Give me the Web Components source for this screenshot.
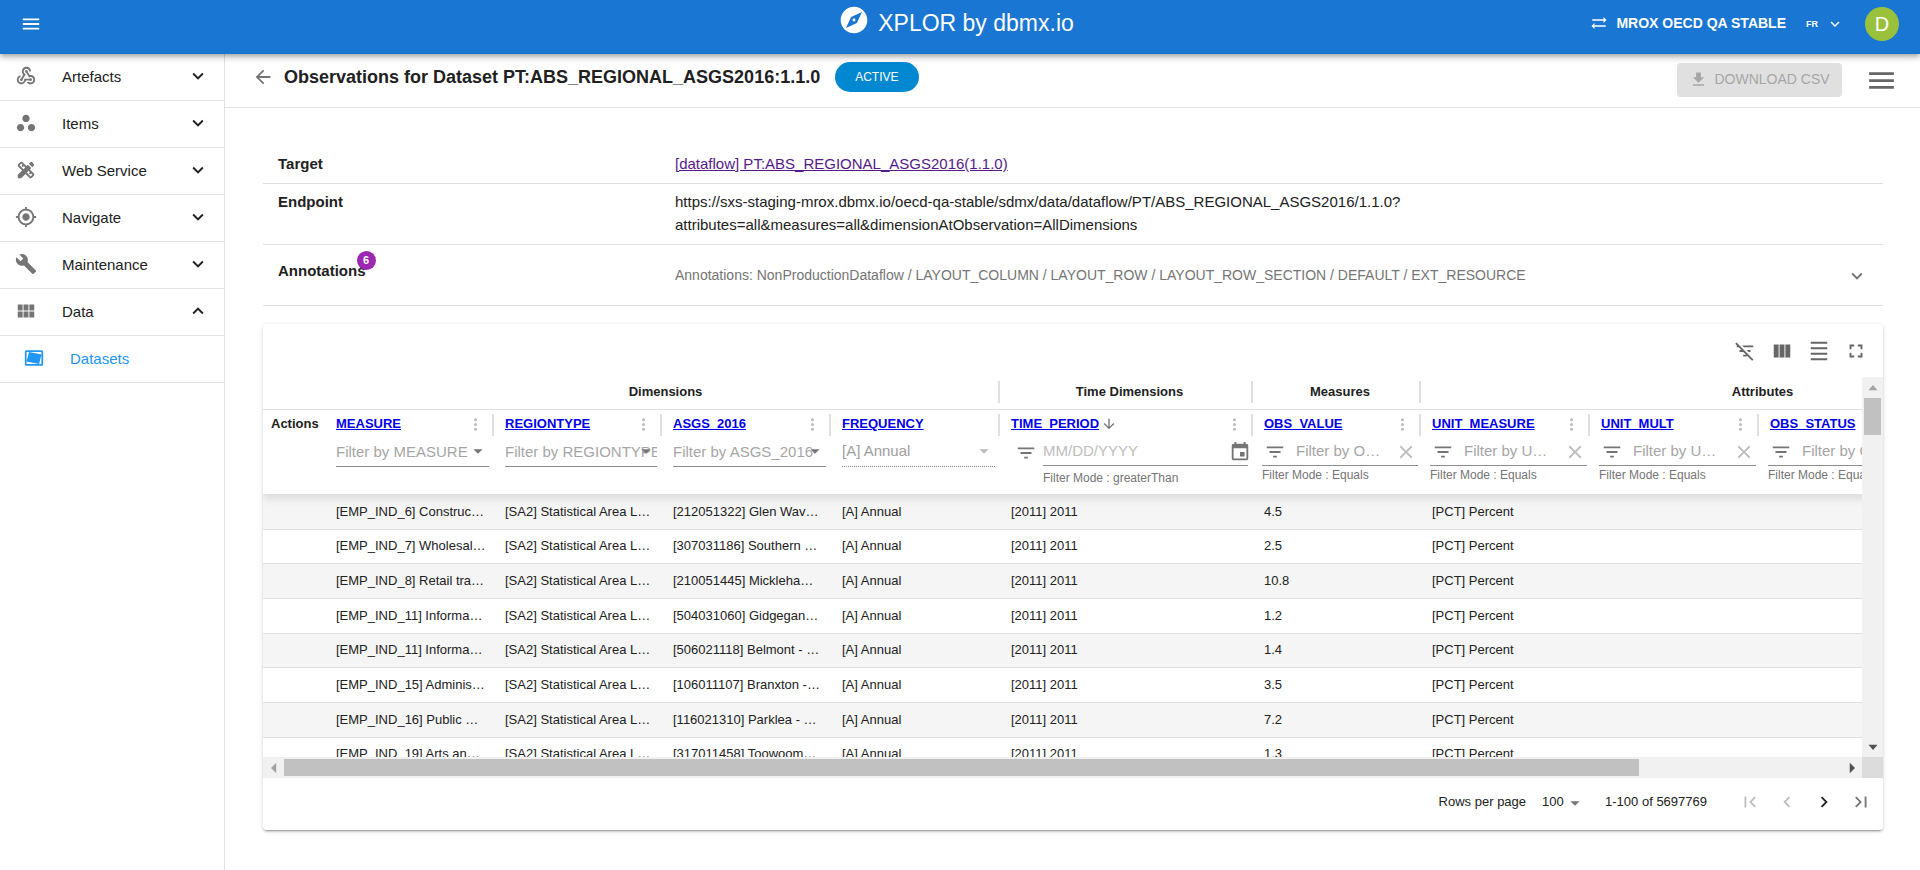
<!DOCTYPE html>
<html lang="en">
<head>
<meta charset="utf-8">
<title>XPLOR by dbmx.io</title>
<style>
  body {
    margin: 0;
    min-height: 100vh;
    background: #fff;
    color: #212121;
    font: 15px/23px "Liberation Sans", Arial, sans-serif;
  }
</style>
</head>
<body>
<xplor-app></xplor-app>

<script>
const ICONS = {
  menu: 'M3 18h18v-2H3v2zm0-5h18v-2H3v2zm0-7v2h18V6H3z',
  webhook: 'M10 15h5.88c.27-.31.67-.5 1.12-.5.83 0 1.5.67 1.5 1.5s-.67 1.5-1.5 1.5c-.44 0-.84-.19-1.12-.5H11.9c-.46 2.28-2.48 4-4.9 4-2.76 0-5-2.24-5-5 0-2.42 1.72-4.44 4-4.9v2.07c-1.16.41-2 1.53-2 2.83 0 1.65 1.35 3 3 3s3-1.35 3-3v-1zm2.5-11c1.65 0 3 1.35 3 3h2c0-2.76-2.24-5-5-5s-5 2.24-5 5c0 1.43.6 2.71 1.55 3.62l-2.35 3.9c-.68.14-1.2.75-1.2 1.48 0 .83.67 1.5 1.5 1.5s1.5-.67 1.5-1.5c0-.16-.02-.31-.07-.45l3.38-5.63C10.49 9.61 9.5 8.42 9.5 7c0-1.65 1.35-3 3-3zm4.5 9c-.64 0-1.23.2-1.72.54l-3.05-5.07C11.53 8.35 11 7.74 11 7c0-.83.67-1.5 1.5-1.5S14 6.17 14 7c0 .15-.02.29-.06.43l2.19 3.65c.28-.05.57-.08.87-.08 2.76 0 5 2.24 5 5s-2.24 5-5 5c-1.85 0-3.47-1.01-4.33-2.5h2.67c.48.32 1.05.5 1.66.5 1.65 0 3-1.35 3-3s-1.35-3-3-3z',
  workspaces: 'M6 13c-2.2 0-4 1.8-4 4s1.8 4 4 4 4-1.8 4-4-1.8-4-4-4zm6-10C9.8 3 8 4.8 8 7s1.8 4 4 4 4-1.8 4-4-1.8-4-4-4zm6 10c-2.2 0-4 1.8-4 4s1.8 4 4 4 4-1.8 4-4-1.8-4-4-4z',
  design: 'm16.24 11.51 1.57-1.57-3.75-3.75-1.57 1.57-4.14-4.13c-.78-.78-2.05-.78-2.83 0l-1.9 1.9c-.78.78-.78 2.05 0 2.83l4.13 4.13L3 17.25V21h3.75l4.76-4.76 4.13 4.13c.95.95 2.23.6 2.83 0l1.9-1.9c.78-.78.78-2.05 0-2.83l-4.13-4.13zm-7.06-.44L5.04 6.94l1.89-1.9L8.2 6.31 7.02 7.5l1.41 1.41 1.19-1.19 1.45 1.45-1.89 1.9zm7.88 7.89-4.13-4.13 1.9-1.9 1.45 1.45-1.19 1.19 1.41 1.41 1.19-1.19 1.27 1.27-1.9 1.9zm3.65-11.92c.39-.39.39-1.02 0-1.41l-2.34-2.34c-.47-.47-1.12-.29-1.41 0l-1.83 1.83 3.75 3.75 1.83-1.83z',
  location: 'M12 8c-2.21 0-4 1.79-4 4s1.79 4 4 4 4-1.79 4-4-1.79-4-4-4zm8.94 3c-.46-4.17-3.77-7.48-7.94-7.94V1h-2v2.06C6.83 3.52 3.52 6.83 3.06 11H1v2h2.06c.46 4.17 3.77 7.48 7.94 7.94V23h2v-2.06c4.17-.46 7.48-3.77 7.94-7.94H23v-2h-2.06zM12 19c-3.87 0-7-3.13-7-7s3.13-7 7-7 7 3.13 7 7-3.13 7-7 7z',
  build: 'm22.7 19-9.1-9.1c.9-2.3.4-5-1.5-6.9-2-2-5-2.4-7.4-1.3L9 6 6 9 1.6 4.7C.4 7.1.9 10.1 2.9 12.1c1.9 1.9 4.6 2.4 6.9 1.5l9.1 9.1c.4.4 1 .4 1.4 0l2.3-2.3c.5-.4.5-1.1.1-1.4z',
  module: 'M14.67 5v6.5H9.33V5h5.34zm1 6.5H21V5h-5.33v6.5zm-1 7.5v-6.5H9.33V19h5.34zm1-6.5V19H21v-6.5h-5.33zm-7.34 0H3V19h5.33v-6.5zm0-1V5H3v6.5h5.33z',
  dataset: 'M3.6 3.500h16.800A1.700 1.700 0 0 1 22 5.200v13.600a1.700 1.700 0 0 1-1.600 1.700H3.600A1.700 1.700 0 0 1 2 18.800V5.200A1.700 1.700 0 0 1 3.600 3.500zM3.900 5.400v13.200h16.200V5.400H3.900zM6.600 5.400 20.100 8.200 17.600 18.600 3.900 15.800z',
  down: 'M16.59 8.59 12 13.17 7.41 8.59 6 10l6 6 6-6z',
  up: 'm12 8-6 6 1.410 1.410L12 10.830l4.590 4.580L18 14z',
  explore: 'M12 10.9c-.61 0-1.1.49-1.1 1.1s.49 1.1 1.1 1.1c.61 0 1.1-.49 1.1-1.1s-.49-1.1-1.1-1.1zM12 2C6.48 2 2 6.48 2 12s4.48 10 10 10 10-4.48 10-10S17.52 2 12 2zm2.19 12.19L6 18l3.81-8.19L18 6l-3.81 8.190z',
  swap: 'm22 8-4-4v3H3v2h15v3l4-4zM2 16l4 4v-3h15v-2H6v-3l-4 4z',
  download: 'M5 20h14v-2H5v2zM19 9h-4V3H9v6H5l7 7 7-7z',
  filterOff: 'M10.83 8H21V6H8.83l2 2zm5 5H18v-2h-4.17l2 2zM14 16.83V18h-4v-2h3.17l-3-3H6v-2h2.17l-3-3H3V6h.17L1.39 4.22 2.8 2.81l18.38 18.38-1.41 1.41L14 16.83z',
  columns: 'M14.67 5v14H9.33V5h5.34zm1 14H21V5h-5.33v14zm-7.34 0V5H3v14h5.330z',
  density: 'M3 2h18v2H3zm0 18h18v2H3zm0-6h18v2H3zm0-6h18v2H3z',
  fullscreen: 'M7 14H5v5h5v-2H7v-3zm-2-4h2V7h3V5H5v5zm12 7h-3v2h5v-5h-2v3zM14 5v2h3v3h2V5h-5z',
  more: 'M12 8c1.1 0 2-.9 2-2s-.9-2-2-2-2 .9-2 2 .9 2 2 2zm0 2c-1.1 0-2 .9-2 2s.9 2 2 2 2-.9 2-2-.9-2-2-2zm0 6c-1.1 0-2 .9-2 2s.9 2 2 2 2-.9 2-2-.9-2-2-2z',
  filter: 'M10 18h4v-2h-4v2zM3 6v2h18V6H3zm3 7h12v-2H6v2z',
  sortDown: 'm20 12-1.41-1.41L13 16.17V4h-2v12.17l-5.58-5.59L4 12l8 8 8-8z',
  close: 'M19 6.41 17.59 5 12 10.59 6.41 5 5 6.41 10.59 12 5 17.59 6.41 19 12 13.41 17.59 19 19 17.59 13.41 12z',
  event: 'M17 12h-5v5h5v-5zM16 1v2H8V1H6v2H5c-1.11 0-1.99.9-1.99 2L3 19c0 1.1.89 2 2 2h14c1.1 0 2-.9 2-2V5c0-1.1-.9-2-2-2h-1V1h-2zm3 18H5V8h14v11z',
  dropdown: 'm7 10 5 5 5-5z',
  back: 'M20 11H7.83l5.59-5.59L12 4l-8 8 8 8 1.41-1.41L7.83 13H20v-2z',
  first: 'M18.41 16.59 13.82 12l4.59-4.59L17 6l-6 6 6 6zM6 6h2v12H6z',
  prev: 'M15.41 7.41 14 6l-6 6 6 6 1.41-1.41L10.83 12z',
  next: 'M10 6 8.59 7.41 13.17 12l-4.58 4.59L10 18l6-6z',
  last: 'M5.59 7.41 10.18 12l-4.59 4.59L7 18l6-6-6-6zM16 6h2v12h-2z',
  triUp: 'M12 8l6 7H6z',
  triDown: 'M12 16l6-7H6z',
  triLeft: 'M8 12l7-7v14z',
  triRight: 'M16 12l-7-7v14z'
};

const define = (name, html) => {
  customElements.define(name, class extends HTMLElement {
    connectedCallback() {
      if (this.shadowRoot) return;
      const template = document.createElement('template');
      template.innerHTML = typeof html === 'function' ? html(this) : html;
      this.attachShadow({ mode: 'open' }).append(template.content.cloneNode(true));
    }
  });
};

const BUTTON_RESET = `
  button { display: inline-flex; align-items: center; justify-content: center; margin: 0; padding: 0;
    border: 0; background: none; color: inherit; font: inherit; cursor: pointer; }
  button:disabled { cursor: default; }
`;

/* Icon: <x-icon name size> */
define('x-icon', el => `
  <style>
    :host { display: inline-flex; flex: none; }
    svg { display: block; fill: currentColor; }
  </style>
  <svg width="${el.getAttribute('size') || 22}" height="${el.getAttribute('size') || 22}" viewBox="0 0 24 24" aria-hidden="true">
    <path fill-rule="evenodd" d="${ICONS[el.getAttribute('name')]}"/>
  </svg>`);

/* Top bar */
define('app-header', `
  <style>
    :host { display: block; position: relative; z-index: 2; background: #1976d2; color: #fff;
      box-shadow: 0 2px 4px -1px rgba(0,0,0,.2), 0 4px 5px rgba(0,0,0,.14), 0 1px 10px rgba(0,0,0,.12); }
    ${BUTTON_RESET}
    header { display: grid; grid-template-columns: 1fr auto 1fr; align-items: center; height: 48px; padding: 0 20px 6px; }
    .left { display: flex; }
    .brand { display: flex; align-self: start; gap: 8px; padding: 4px 8px 0 0; font-size: 23px; line-height: 38px; }
    .right { display: flex; justify-content: flex-end; align-items: center; }
    .tenant { gap: 8px; font-size: 14px; font-weight: 700; line-height: 20px; padding-bottom: 2px; }
    .lang { gap: 8px; margin: 0 20px; font-size: 9px; font-weight: 700; }
    .avatar { width: 34px; height: 34px; margin: 0 1px; border-radius: 50%; background: #9ac13c; font-size: 20px; }
  </style>
  <header>
    <div class="left"><button aria-label="Menu"><x-icon name="menu" size="22"></x-icon></button></div>
    <div class="brand"><x-icon name="explore" size="32"></x-icon><span>XPLOR by dbmx.io</span></div>
    <div class="right">
      <button class="tenant"><x-icon name="swap" size="18"></x-icon>MROX OECD QA STABLE</button>
      <button class="lang">FR<x-icon name="down" size="18"></x-icon></button>
      <button class="avatar" aria-label="Account">D</button>
    </div>
  </header>`);

/* Side navigation */
define('nav-item', el => `
  <style>
    :host { display: block; border-bottom: 1px solid #e4e4e4; }
    a { display: flex; align-items: center; height: 44px; padding: 0 15px 2px; color: inherit; text-decoration: none; }
    .icon { color: #757575; margin-right: 25px; }
    .label { flex: 1; }
    :host([child]) a { padding-left: 23px; color: #2196f3; }
    :host([child]) .icon { color: inherit; }
  </style>
  <a href="#">
    <x-icon class="icon" name="${el.getAttribute('icon')}"></x-icon>
    <span class="label"><slot></slot></span>
    ${el.hasAttribute('child') ? '' : `<x-icon name="${el.hasAttribute('open') ? 'up' : 'down'}"></x-icon>`}
  </a>`);

define('side-nav', `
  <style>
    :host { display: block; border-right: 1px solid #e0e0e0; }
  </style>
  <nav>
    <nav-item icon="webhook">Artefacts</nav-item>
    <nav-item icon="workspaces">Items</nav-item>
    <nav-item icon="design">Web Service</nav-item>
    <nav-item icon="location">Navigate</nav-item>
    <nav-item icon="build">Maintenance</nav-item>
    <nav-item icon="module" open>Data</nav-item>
    <nav-item icon="dataset" child>Datasets</nav-item>
  </nav>`);

/* Page title bar */
define('page-title', `
  <style>
    :host { display: flex; align-items: center; justify-content: space-between; height: 46px; padding: 0 22px 7px 27px;
      border-bottom: 1px solid #e4e4e4; }
    ${BUTTON_RESET}
    .left, .right { display: flex; align-items: center; }
    .back { color: #757575; }
    h1 { margin: 0 15px 0 10px; font-size: 18px; line-height: 26px; }
    .chip { padding: 0 20px; border-radius: 15px; background: #0288d1; color: #fff; font-size: 12px; line-height: 30px; }
    .download { gap: 6px; width: 165px; height: 34px; padding-bottom: 2px; border-radius: 4px; background: #e0e0e0; color: #a6a6a6; font-size: 14px; }
    .right { gap: 23px; padding-top: 6px; }
    .more { color: #666; width: 33px; height: 34px; }
  </style>
  <div class="left">
    <button class="back" aria-label="Back"><x-icon name="back"></x-icon></button>
    <h1>Observations for Dataset PT:ABS_REGIONAL_ASGS2016:1.1.0</h1>
    <span class="chip">ACTIVE</span>
  </div>
  <div class="right">
    <button class="download" disabled><x-icon name="download" size="19"></x-icon>DOWNLOAD CSV</button>
    <button class="more" aria-label="Page menu"><x-icon name="menu" size="33"></x-icon></button>
  </div>`);

/* One labelled row of dataset details */
define('detail-row', el => `
  <style>
    :host { display: grid; grid-template-columns: 397px 1fr; padding: 6px 0 8px; border-bottom: 1px solid #e0e0e0; }
    .label { padding-left: 15px; font-weight: 700; }
    .label span { position: relative; }
    .value { padding: 0 15px; }
    .badge { position: absolute; right: -10px; top: -11px; width: 19px; height: 19px; border-radius: 50%;
      background: #9c27b0; color: #fff; font-size: 11px; line-height: 19px; text-align: center; }
    :host([tall]) { padding: 14px 0 16px; }
    :host([tall]) .value { padding-top: 3px; }
  </style>
  <div class="label"><span>${el.getAttribute('label')}${el.hasAttribute('badge') ? `<b class="badge">${el.getAttribute('badge')}</b>` : ''}</span></div>
  <div class="value"><slot></slot></div>`);

define('dataset-details', `
  <style>
    :host { display: block; }
    ${BUTTON_RESET}
    a { color: #551a8b; }
    .accordion { width: 100%; height: 27px; justify-content: space-between; color: #757575; font-size: 14px; }
  </style>
  <detail-row label="Target"><a href="#">[dataflow] PT:ABS_REGIONAL_ASGS2016(1.1.0)</a></detail-row>
  <detail-row label="Endpoint">https://sxs-staging-mrox.dbmx.io/oecd-qa-stable/sdmx/data/dataflow/PT/ABS_REGIONAL_ASGS2016/1.1.0?<br>attributes=all&amp;measures=all&amp;dimensionAtObservation=AllDimensions</detail-row>
  <detail-row label="Annotations" badge="6" tall>
    <button class="accordion" aria-expanded="false"><span>Annotations: NonProductionDataflow / LAYOUT_COLUMN / LAYOUT_ROW / LAYOUT_ROW_SECTION / DEFAULT / EXT_RESOURCE</span><x-icon name="down"></x-icon></button>
  </detail-row>`);

/* Column filter: kind = autocomplete | fixed | date | text */
const FILTERS = {
  autocomplete: name => `
    <div class="line auto"><input placeholder="Filter by ${name}" aria-label="Filter by ${name}"><x-icon class="arrow" name="dropdown"></x-icon></div>`,
  fixed: name => `
    <div class="line auto off"><select disabled aria-label="Filter by ${name}"><option>[A] Annual</option></select><x-icon class="arrow" name="dropdown"></x-icon></div>`,
  date: name => `
    <div class="date">
      <button aria-label="Filter mode"><x-icon name="filter"></x-icon></button>
      <div class="field">
        <div class="line"><input placeholder="MM/DD/YYYY" aria-label="Filter by ${name}"><button aria-label="Choose date"><x-icon name="event"></x-icon></button></div>
        <div class="help">Filter Mode : greaterThan</div>
      </div>
    </div>`,
  text: name => `
    <div class="text">
      <div class="line"><button aria-label="Filter mode"><x-icon name="filter"></x-icon></button><input placeholder="Filter by ${name}" aria-label="Filter by ${name}"><button class="clear" aria-label="Clear"><x-icon name="close"></x-icon></button></div>
      <div class="help">Filter Mode : Equals</div>
    </div>`
};
define('column-filter', el => `
  <style>
    :host { display: block; font-weight: 400; color: #757575; }
    ${BUTTON_RESET}
    input, select { flex: 1; width: 0; min-width: 0; height: 24px; margin: 0; padding: 0 0 2px; border: 0; border-radius: 0; outline: 0; background: none;
      appearance: none; color: #9e9e9e; opacity: 1; font: inherit; font-size: 15px; text-overflow: ellipsis; }
    ::placeholder { color: #a6a6a6; opacity: 1; }
    .line { display: flex; align-items: center; height: 27px; border-bottom: 1px solid #8c8c8c; }
    .auto { position: relative; height: 28px; }
    .auto input { text-overflow: clip; }
    .arrow { position: absolute; right: 0; top: 2px; }
    .off { border-bottom: 1px dotted #8c8c8c; }
    .off .arrow { color: #bdbdbd; }
    .date { display: flex; }
    .date > button { align-self: start; height: 27px; margin: 1px 6px 0 4px; }
    .date input::placeholder { color: #bdbdbd; }
    .date .line button { margin-right: -3px; }
    .date .help { padding-top: 3px; }
    .field { flex: 1; }
    .text { margin: 0 -2px; }
    .text button { margin-left: 2px; }
    .text input { margin-left: 10px; }
    .text .clear { margin: 0 1px 0 14px; color: #bdbdbd; }
    .help { font-size: 12px; line-height: 18px; }
  </style>
  ${FILTERS[el.getAttribute('kind')](el.getAttribute('name'))}`);

/* Scroll bar with end arrows: orientation = vertical | horizontal */
define('scroll-track', el => {
  const vertical = el.getAttribute('orientation') === 'vertical';
  return `
  <style>
    :host { display: flex; flex-direction: ${vertical ? 'column' : 'row'}; background: #f1f1f1; color: #505050; min-height: 0; }
    .end { display: flex; flex: none; align-items: center; justify-content: center; width: 21px; height: 21px; }
    .end.start { color: #a3a3a3; }
    .track { flex: 1; display: flex; flex-direction: ${vertical ? 'column' : 'row'}; padding: ${vertical ? '0 2px' : '2px 0'}; }
    .thumb { flex: none; flex-basis: ${el.getAttribute('size')}; background: #c1c1c1; }
  </style>
  <div class="end start"><x-icon name="${vertical ? 'triUp' : 'triLeft'}" size="18"></x-icon></div>
  <div class="track"><div class="thumb"></div></div>
  <div class="end"><x-icon name="${vertical ? 'triDown' : 'triRight'}" size="18"></x-icon></div>`;
});

/* Observation table */
const COLUMNS = [
  ['MEASURE', 'autocomplete', 169], ['REGIONTYPE', 'autocomplete', 168], ['ASGS_2016', 'autocomplete', 169],
  ['FREQUENCY', 'fixed', 169], ['TIME_PERIOD', 'date', 253], ['OBS_VALUE', 'text', 168],
  ['UNIT_MEASURE', 'text', 169], ['UNIT_MULT', 'text', 169], ['OBS_STATUS', 'text', 169]
];
const ROWS = [
  ['[EMP_IND_6] Construc…', '[212051322] Glen Wav…', '4.5'],
  ['[EMP_IND_7] Wholesal…', '[307031186] Southern …', '2.5'],
  ['[EMP_IND_8] Retail tra…', '[210051445] Mickleha…', '10.8'],
  ['[EMP_IND_11] Informa…', '[504031060] Gidgegan…', '1.2'],
  ['[EMP_IND_11] Informa…', '[506021118] Belmont - …', '1.4'],
  ['[EMP_IND_15] Adminis…', '[106011107] Branxton -…', '3.5'],
  ['[EMP_IND_16] Public …', '[116021310] Parklea - …', '7.2'],
  ['[EMP_IND_19] Arts an…', '[317011458] Toowoom…', '1.3']
];
define('observation-table', `
  <style>
    :host { display: grid; grid-template-columns: minmax(0, 1fr) 21px; grid-template-rows: minmax(0, 380px) 21px; }
    ${BUTTON_RESET}
    .view { overflow: hidden; }
    .corner { background: #dcdcdc; }
    table { width: 1838px; table-layout: fixed; border-collapse: separate; border-spacing: 0; font-size: 13px; line-height: 18px; }
    thead { position: relative; z-index: 1; background: #fff; box-shadow: 0 4px 8px rgba(0,0,0,.1); }
    th, td { padding: 0 8px; border-bottom: 1px solid #e0e0e0; text-align: left; white-space: nowrap; }
    th { position: relative; vertical-align: top; background: #fff; }
    td { padding-bottom: 1px; }
    .groups th { height: 30px; padding-bottom: 2px; text-align: center; vertical-align: middle; }
    .names th { height: 84px; }
    .sep::after { content: ""; position: absolute; top: 4px; right: 3px; width: 2px; height: 22px; background: #e0e0e0; }
    .title { display: flex; align-items: center; height: 28px; }
    .title a { color: #0000ee; }
    .title x-icon { color: #757575; }
    .title a + x-icon { margin-left: 2px; }
    .title button { margin: 0 4px 0 auto; }
    .title button x-icon { color: #bdbdbd; }
    tbody tr { height: 35px; }
    tbody tr:nth-child(3n+2) { height: 34px; }
    tbody tr:nth-child(odd) { background: #f5f5f5; }
  </style>
  <div class="view" tabindex="0">
    <table>
      <colgroup><col style="width:65px">${COLUMNS.map(c => `<col style="width:${c[2]}px">`).join('')}<col></colgroup>
      <thead>
        <tr class="groups">
          <th></th><th class="sep" colspan="4">Dimensions</th><th class="sep">Time Dimensions</th>
          <th class="sep">Measures</th><th colspan="4">Attributes</th>
        </tr>
        <tr class="names">
          <th><div class="title">Actions</div></th>
          ${COLUMNS.map(([name, kind]) => `<th class="sep"><div class="title"><a href="#">${name}</a>${
            kind === 'date' ? '<x-icon name="sortDown" size="16"></x-icon>' : ''}${
            kind === 'fixed' ? '' : '<button aria-label="Column actions"><x-icon name="more" size="19"></x-icon></button>'
          }</div><column-filter kind="${kind}" name="${name}"></column-filter></th>`).join('')}
          <th></th>
        </tr>
      </thead>
      <tbody>
        ${ROWS.map(([measure, area, value]) => `<tr><td></td><td>${measure}</td><td>[SA2] Statistical Area L…</td><td>${area}</td><td>[A] Annual</td><td>[2011] 2011</td><td>${value}</td><td>[PCT] Percent</td><td></td><td></td><td></td></tr>`).join('')}
      </tbody>
    </table>
  </div>
  <scroll-track orientation="vertical" size="11%"></scroll-track>
  <scroll-track orientation="horizontal" size="87%"></scroll-track>
  <div class="corner"></div>`);

/* Pagination */
define('table-pager', `
  <style>
    :host { display: flex; align-items: center; justify-content: flex-end; height: 48px; padding: 0 10px 4px 0; font-size: 13px; line-height: 18px; }
    ${BUTTON_RESET}
    .size { position: relative; display: flex; margin: 0 19px 0 16px; }
    select { width: 44px; margin: 0; padding: 0; border: 0; background: none; appearance: none; color: inherit; font: inherit; }
    .size x-icon { position: absolute; right: 0; top: -1px; color: #757575; pointer-events: none; }
    .pages { display: flex; gap: 13px; margin-left: 31px; color: #757575; }
    .pages button { width: 24px; height: 24px; }
    .pages button:disabled { color: #bdbdbd; }
    .pages .next { color: #212121; }
  </style>
  <label for="rows">Rows per page</label>
  <div class="size"><select id="rows"><option>100</option></select><x-icon name="dropdown"></x-icon></div>
  <span>1-100 of 5697769</span>
  <div class="pages">
    <button disabled aria-label="First page"><x-icon name="first"></x-icon></button>
    <button disabled aria-label="Previous page"><x-icon name="prev"></x-icon></button>
    <button class="next" aria-label="Next page"><x-icon name="next"></x-icon></button>
    <button aria-label="Last page"><x-icon name="last"></x-icon></button>
  </div>`);

/* Card that holds the toolbar, the table and the pager */
define('table-card', `
  <style>
    :host { display: block; border-radius: 4px; background: #fff;
      box-shadow: 0 3px 1px -2px rgba(0,0,0,.2), 0 2px 2px rgba(0,0,0,.14), 0 1px 5px rgba(0,0,0,.12); }
    ${BUTTON_RESET}
    .tools { display: flex; justify-content: flex-end; align-items: center; gap: 13px; height: 53px; padding-right: 15px; color: #666; }
    .tools button { width: 24px; height: 24px; }
  </style>
  <div class="tools">
    <button aria-label="Hide filters"><x-icon name="filterOff"></x-icon></button>
    <button aria-label="Columns"><x-icon name="columns"></x-icon></button>
    <button aria-label="Density"><x-icon name="density"></x-icon></button>
    <button aria-label="Full screen"><x-icon name="fullscreen"></x-icon></button>
  </div>
  <observation-table></observation-table>
  <table-pager></table-pager>`);

define('xplor-app', `
  <style>
    :host { display: grid; grid-template-rows: auto 1fr; min-height: 100vh; }
    .body { display: grid; grid-template-columns: 225px minmax(0, 1fr); }
    .content { padding: 38px 37px 38px 38px; }
    table-card { margin-top: 18px; }
  </style>
  <app-header></app-header>
  <div class="body">
    <side-nav></side-nav>
    <main>
      <page-title></page-title>
      <div class="content">
        <dataset-details></dataset-details>
        <table-card></table-card>
      </div>
    </main>
  </div>`);
</script>
</body>
</html>
